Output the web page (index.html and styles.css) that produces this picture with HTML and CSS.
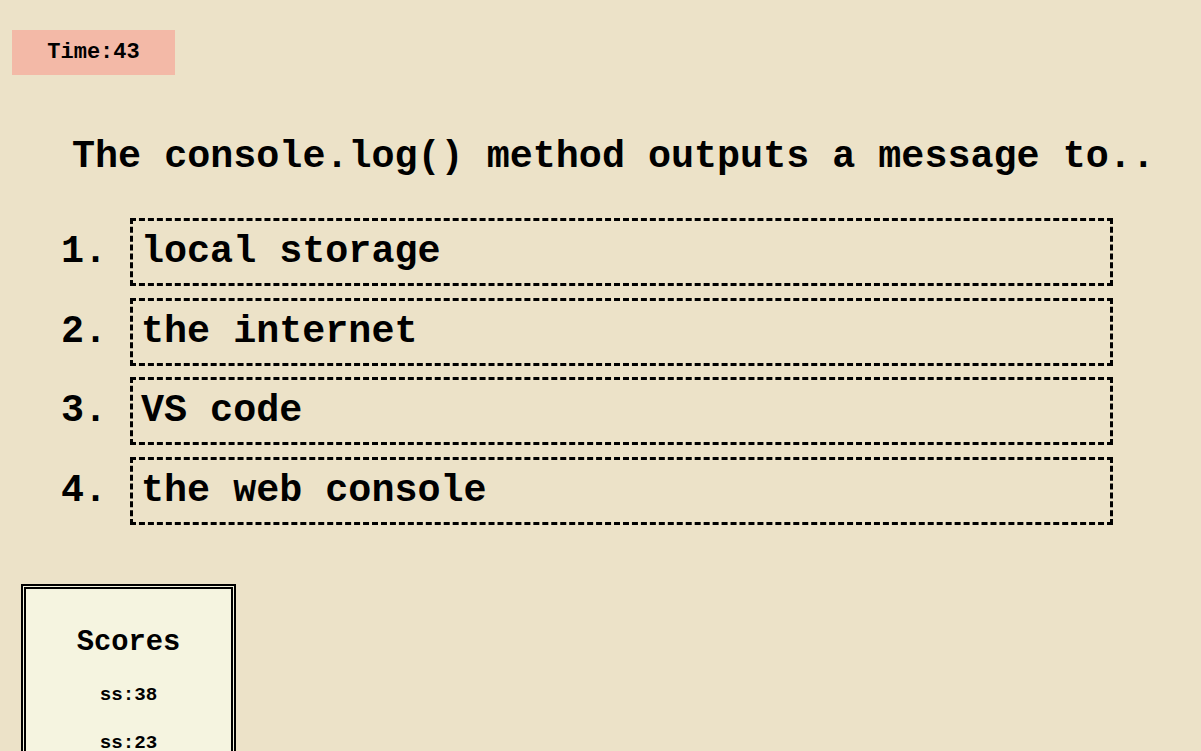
FILE: index.html
```html
<!DOCTYPE html>
<html>
<head>
<meta charset="utf-8">
<link rel="stylesheet" href="styles.css">
</head>
<body>
  <div class="top">
    <div class="timer">Time:43</div>
  </div>
  <main class="quiz">
    <h1 class="question">The console.log() method outputs a message to..</h1>
    <ol class="options">
      <li class="option"><span class="num">1.</span><span class="choice">local storage</span></li>
      <li class="option"><span class="num">2.</span><span class="choice">the internet</span></li>
      <li class="option"><span class="num">3.</span><span class="choice">VS code</span></li>
      <li class="option"><span class="num">4.</span><span class="choice">the web console</span></li>
    </ol>
  </main>
  <aside class="scores">
    <h2 class="scores-title">Scores</h2>
    <p class="score">ss:38</p>
    <p class="score">ss:23</p>
  </aside>
</body>
</html>
```

FILE: styles.css
```css
html, body {
  margin: 0;
  padding: 0;
}
body {
  background: #ece2c8;
  font-family: "Liberation Mono", "Courier New", monospace;
  font-weight: bold;
  color: #000;
  padding: 30px 12px 0 12px;
  height: 751px;
  box-sizing: border-box;
  overflow: hidden;
}
.top {
  display: flex;
}
.timer {
  background: #f3b9a7;
  width: 163px;
  height: 45px;
  display: flex;
  align-items: center;
  justify-content: center;
  font-size: 22px;
}
.quiz {
  padding-top: 60px;
}
.question {
  margin: 0 0 0 60px;
  font-size: 38.4px;
  font-weight: bold;
}
.options {
  list-style: none;
  margin: 39px 0 0 0;
  padding: 0 0 0 49px;
  display: flex;
  flex-direction: column;
  gap: 11.5px;
}
.option {
  display: flex;
  align-items: center;
  font-size: 38.4px;
}
.num {
  width: 69px;
  flex: none;
}
.choice {
  width: 983px;
  box-sizing: border-box;
  border: 3px dashed #000;
  padding: 9px 8px;
}
.scores {
  margin: 59px 0 0 9px;
  width: 215px;
  box-sizing: border-box;
  background: #f5f4e0;
  border: 5px double #000;
  text-align: center;
  padding-top: 37px;
}
.scores-title {
  margin: 0 0 22px 0;
  font-size: 28.8px;
}
.score {
  margin: 0 0 20px 0;
  font-size: 19.2px;
  line-height: 28px;
}
```
